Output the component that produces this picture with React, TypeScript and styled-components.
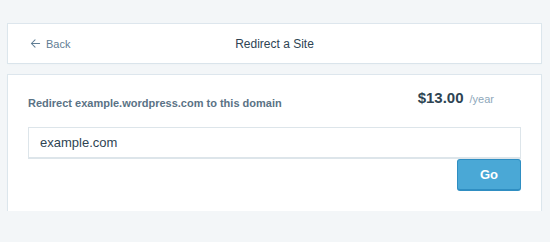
import * as React from 'react'
import styled, { createGlobalStyle } from 'styled-components'

const GlobalStyle = createGlobalStyle`
  html, body {
    margin: 0;
    padding: 0;
    background: #f3f6f8;
    font-family: "Liberation Sans", Arial, sans-serif;
    color: #2e4453;
  }
`

const Page = styled.div`
  padding: 24px 9px 0 8px;
  display: flex;
  flex-direction: column;
  gap: 12px;
`

const Card = styled.div`
  background: #fff;
  box-shadow: 0 0 0 1px rgba(200, 215, 225, 0.5), 0 1px 2px #e9eff3;
`

const HeaderCard = styled(Card)`
  height: 39px;
  display: grid;
  grid-template-columns: 1fr auto 1fr;
  align-items: center;
  padding: 0 22px;
`

const BackLink = styled.a`
  display: inline-flex;
  align-items: center;
  gap: 5px;
  font-size: 11px;
  color: #5f7d94;
  text-decoration: none;
  justify-self: start;

  & > svg {
    display: block;
  }
`

const Title = styled.div`
  font-size: 12px;
  color: #2e4453;
`

const ContentCard = styled(Card)`
  height: 136px;
  box-sizing: border-box;
  padding: 14px 20px 20px 20px;
  display: flex;
  flex-direction: column;
`

const TopRow = styled.div`
  display: flex;
  justify-content: space-between;
  align-items: flex-start;
  height: 38px;
`

const Label = styled.div`
  margin-top: 8px;
  font-size: 11px;
  line-height: 13px;
  font-weight: 700;
  color: #5a7285;
`

const Price = styled.div`
  display: flex;
  align-items: baseline;
  gap: 6px;
  margin-right: 27px;
  line-height: 18px;
`

const Amount = styled.span`
  font-size: 15px;
  font-weight: 700;
  color: #2e4453;
`

const Period = styled.span`
  font-size: 11px;
  color: #8ea8bb;
`

const Input = styled.input`
  box-sizing: border-box;
  height: 32px;
  width: 100%;
  border: 1px solid #dde5ea;
  border-bottom-width: 2px;
  padding: 0 11px;
  font-family: inherit;
  font-size: 13px;
  color: #2e4453;
  outline: none;
`

const Actions = styled.div`
  display: flex;
  justify-content: flex-end;
`

const Button = styled.button`
  box-sizing: border-box;
  width: 64px;
  height: 32px;
  background: #4aa8d6;
  border: 1px solid #2f8ec2;
  border-bottom-width: 2px;
  border-radius: 3px;
  color: #fff;
  font-family: inherit;
  font-size: 13px;
  font-weight: 700;
  cursor: pointer;
`

const ArrowLeft = () => (
  <svg width="11" height="11" viewBox="0 0 24 24" fill="none" stroke="#5f7d94" strokeWidth="2.2" strokeLinecap="round" strokeLinejoin="round">
    <path d="M21 12H3M11 4l-8 8 8 8" />
  </svg>
)

export default function App() {
  const [domain, setDomain] = React.useState('example.com')

  return (
    <>
      <GlobalStyle />
      <Page>
        <HeaderCard>
          <BackLink href="#">
            <ArrowLeft />
            Back
          </BackLink>
          <Title>Redirect a Site</Title>
          <span />
        </HeaderCard>
        <ContentCard>
          <TopRow>
            <Label>Redirect example.wordpress.com to this domain</Label>
            <Price>
              <Amount>$13.00</Amount>
              <Period>/year</Period>
            </Price>
          </TopRow>
          <Input value={domain} onChange={(e) => setDomain(e.target.value)} />
          <Actions>
            <Button>Go</Button>
          </Actions>
        </ContentCard>
      </Page>
    </>
  )
}
